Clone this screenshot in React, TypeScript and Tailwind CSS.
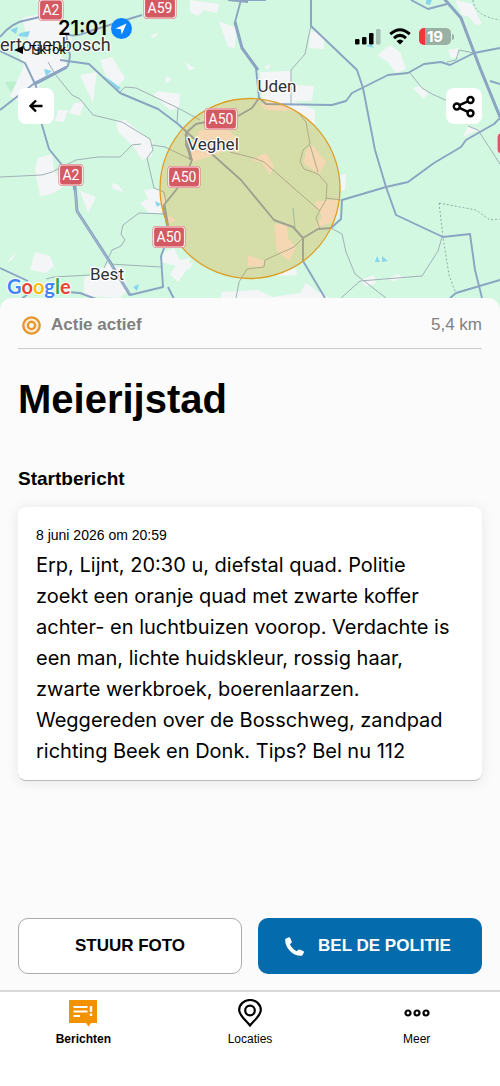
import type { ReactNode } from "react";

const towns = [
  { name: "Uden", x: 277, y: 92 },
  { name: "Veghel", x: 213, y: 150 },
  { name: "Best", x: 107, y: 280 },
];

const shields = [
  { name: "A2", x: 51, y: 10 },
  { name: "A59", x: 160, y: 8 },
  { name: "A50", x: 221, y: 119 },
  { name: "A50", x: 184, y: 177 },
  { name: "A2", x: 71, y: 175 },
  { name: "A50", x: 169, y: 237 },
];

const builtUp = [
  "M22 18 L40 14 L68 22 L72 40 L60 52 L68 68 L44 76 L34 98 L22 104 L10 96 L24 66 L18 52 L28 40 Z",
  "M80 75 L97 72 L93 103 Z",
  "M100 60 L112 57 L125 78 L118 86 L106 76 Z",
  "M58 110 L68 110 L64 122 L55 121 Z M74 103 L84 102 L80 116 L69 113 Z",
  "M116 121 L125 120 L153 142 L152 156 L142 160 L133 146 L118 132 Z",
  "M38 158 L52 154 L54 170 L64 186 L52 194 L40 196 L35 170 Z",
  "M80 191 L96 197 L88 213 Z M112 183 L118 185 L124 192 L113 189 Z",
  "M144 190 L160 188 L166 202 L162 214 L150 214 L140 203 L148 199 Z",
  "M153 95 L158 91 L180 94 L179 108 L170 110 Z",
  "M185 62 L195 68 L189 71 Z M166 76 L172 79 L165 84 Z M150 36 L159 32 L154 38 Z",
  "M190 0 L219 4 L217 13 L204 10 L198 16 L190 12 Z",
  "M219 21 L236 28 L235 48 L228 47 Z",
  "M260 72 L291 71 L291 85 L314 86 L312 101 L293 101 L315 110 L315 124 L298 113 L262 102 Z",
  "M310 30 L324 36 L324 49 L309 48 Z",
  "M264 67 L271 64 L268 70 Z",
  "M377 55 L390 45 L400 52 L406 69 L396 73 L388 62 Z",
  "M448 50 L458 48 L459 57 L451 58 Z",
  "M413 88 L420 86 L428 93 L424 99 Z",
  "M455 0 L472 4 L482 24 L476 25 L468 16 L462 15 Z",
  "M463 137 L468 126 L480 130 L472 133 Z",
  "M340 175 L346 174 L345 190 L341 191 Z",
  "M35 252 L50 256 L54 266 L46 273 L30 270 Z M7 262 L16 252 L12 260 Z",
  "M84 278 L108 264 L122 268 L128 290 L120 298 L84 296 Z",
  "M164 252 L174 248 L180 260 L190 258 L188 268 L178 282 L170 274 L176 266 L162 262 Z",
  "M188 264 L194 262 L190 268 L184 271 Z",
  "M222 292 L258 290 L272 297 L300 293 L306 283 L318 292 L330 298 L220 300 Z",
  "M276 274 L296 268 L297 275 L278 276 Z",
  "M360 280 L374 275 L376 283 L366 287 Z M388 279 L398 274 L403 278 L394 281 Z",
];

// towns that lie inside the search radius
const builtUpInside = [
  "M190 150 L200 130 L228 130 L240 140 L232 148 L212 156 L192 162 Z",
  "M260 104 L288 106 L286 111 L266 110 Z",
  "M259 156 L266 153 L274 166 L270 175 L262 163 L252 160 Z",
  "M306 150 L312 145 L326 162 L319 174 L304 163 Z",
  "M314 202 L340 199 L338 216 L332 222 L316 228 L322 216 Z",
  "M274 224 L287 225 L288 238 L296 248 L289 261 L277 251 Z",
  "M248 255 L264 261 L262 267 L248 266 Z",
  "M166 214 L176 220 L168 224 Z",
];

const majorRoads = [
  "M0 37 Q12 22 27 20 L40 17",
  "M0 51 L25 63 L36 86 L42 125 L49 149 L62 165 L71 176 L76 196 L77 211 L110 262 L130 295 L163 287 L161 256 L168 238",
  "M0 110 L36 82 L68 66 L70 56 L66 34 Q75 38 90 31 L142 15",
  "M60 60 L89 64 L120 93 L158 109 L178 124 L190 135 L213 155 L241 180 L274 220 L293 227 L303 238 L303 261 L325 298",
  "M241 0 L235 22 L242 48 L256 68 L259 98 L252 108 L238 116 M221 119 L196 124 L186 133 L186 145 L192 160 L184 180 L164 205 L169 237",
  "M241 0 L266 0 M228 0 L248 2",
  "M258 97 L266 104 L332 105 L346 101 L352 93 L388 75 L408 73 L424 64 L441 62 L450 65 L474 53 L500 48",
  "M311 0 L311 26 L357 70 L363 88 L375 150 L386 187 L396 215 L443 237 L470 234 L475 270 L482 298",
  "M303 238 L318 229 L331 228 L341 219 L342 200 L386 187 L408 182 L434 163 L461 147 L466 140 L494 124 L500 118",
  "M411 0 L428 9 L447 4",
  "M440 -6 L461 18 L480 68 L500 117 M490 81 L500 84",
  "M450 298 L456 293 L500 280",
  "M0 268 L28 281 M68 292 L80 293 L96 299 M20 300 L28 294 M168 287 L174 299",
];

const minorRoads = [
  "M48 62 L55 74 L72 95 L80 99 L93 115 L122 122 L150 139 L153 150 L147 158 L154 188 L164 192 L166 202",
  "M120 92 L125 87 L136 88 L178 108 L177 123 M178 108 L200 120",
  "M152 145 L165 147 L192 160",
  "M0 177 L42 175 L52 172 L76 160 L98 157 L120 157 L132 145 L141 144",
  "M104 268 L112 250 L121 246 L125 240 L121 234 L123 225 L139 213 L166 214",
  "M110 264 L161 267 M46 279 L54 277 L90 275",
  "M311 26 L310 30 L305 54 L291 70 L291 105",
  "M298 112 L306 122 L310 144 L303 150 L300 162 L304 169 L318 174 L327 184 L326 200 L320 210 L316 218 L320 229",
  "M230 152 L254 158 L264 162 L320 211 M310 145 L318 172 M326 198 L341 200",
  "M303 238 L294 247 L265 260 L264 267 L247 269 L239 282 L236 298",
  "M331 228 L342 234 L346 252 L355 274 L386 298 M341 298 L360 281 L422 276 L438 251 L442 237",
  "M410 73 L422 88 L432 94 L450 102",
  "M468 126 L478 130 L500 164 M447 62 L456 60 L459 50 L474 53",
];

const water = [
  "M10 30 L18 27 L16 34 Z M20 33 L30 31 L28 37 L18 36 Z",
  "M44 69 L52 71 L46 76 Z",
  "M104 76 L121 88 L118 90 Z",
  "M375 262 L377 256 L380 262 Z M382 256 L388 261 L382 262 Z",
  "M155 201 L161 204 L157 207 Z",
  "M133 287 L139 284 L137 291 Z",
  "M426 0 L432 0 L430 5 L426 4 Z M366 46 L371 44 L374 48 Z",
];

function GoogleMap() {
  return (
    <svg
      className="absolute inset-0 h-full w-full"
      viewBox="0 0 500 310"
      preserveAspectRatio="xMidYMin slice"
      role="img"
      aria-label="Kaart"
    >
      <rect width="500" height="310" fill="#d2f8e2" />
      <path d="M5 82 L18 81 L14 98 Z" fill="#baf0ce" />
      {builtUp.map((d) => (
        <path key={d} d={d} fill="#f4f5f6" />
      ))}
      {builtUpInside.map((d) => (
        <path key={d} d={d} fill="#ffeff0" />
      ))}
      {water.map((d) => (
        <path key={d} d={d} fill="#88d5ee" />
      ))}
      <path d="M293 208 L295 228" stroke="#88c8d8" strokeWidth="1" />
      {minorRoads.map((d) => (
        <path key={d} d={d} fill="none" stroke="#9fb2b6" strokeWidth="1" />
      ))}
      <path
        d="M473 0 Q474 16 500 20 M439 203 L476 210 L490 220 L500 219 M439 203 L443 237 L449 275 L455 291"
        fill="none"
        stroke="#93aaa6"
        strokeWidth="1"
        strokeDasharray="2 2"
      />
      {majorRoads.map((d) => (
        <path key={d} d={d} fill="none" stroke="#8aa4c1" strokeWidth="1.9" strokeLinejoin="round" />
      ))}
      <path
        d="M35 84 L67 67 M75 186 L77 211 L110 262 L130 295 M186 134 L191 160 M235 22 L242 48 L258 70 M164 205 L169 234 M440 -6 L461 18 L480 68 L500 117"
        fill="none"
        stroke="#8aa4c1"
        strokeWidth="3"
        strokeLinejoin="round"
      />
      <path d="M75 190 L77 211 L130 294" fill="none" stroke="#b4c6d8" strokeWidth="0.7" />

      <circle cx="250" cy="188.500" r="90" fill="#dc9610" fillOpacity=".27" stroke="#dd9e26" strokeWidth="1.3" />

      {shields.map((s) => {
        const w = s.name.length === 2 ? 23 : 31;
        return (
          <g key={s.name + s.x}>
            <rect x={s.x - w / 2 - 1} y={s.y - 11} width={w + 2} height="22" rx="4" fill="#d6666d" />
            <rect x={s.x - w / 2} y={s.y - 10} width={w} height="20" rx="3" fill="#d35a62" stroke="#fbe6e8" strokeWidth="1.2" />
            <text x={s.x} y={s.y + 5} textAnchor="middle" fill="#fff" className="font-[Roboto] text-[14px]">
              {s.name}
            </text>
          </g>
        );
      })}
      <rect x="497" y="133" width="30" height="21" rx="4" fill="#d35a62" stroke="#fbe6e8" strokeWidth="1.2" />
      {towns.map((t) => (
        <text
          key={t.name}
          x={t.x}
          y={t.y}
          textAnchor="middle"
          fill="#2f3133"
          stroke="#fff"
          strokeWidth="2.5"
          strokeLinejoin="round"
          paintOrder="stroke"
          className="font-[Roboto] text-[17px]"
        >
          {t.name}
        </text>
      ))}
      <text
        x="0"
        y="51"
        fill="#2f3133"
        stroke="#fff"
        strokeWidth="2"
        strokeLinejoin="round"
        paintOrder="stroke"
        className="font-[Roboto] text-[18px]"
      >
        ertogenbosch
      </text>
      <text x="7" y="294" stroke="#fff" strokeWidth="2" paintOrder="stroke" className="font-[Lato] text-[20px] font-bold">
        <tspan fill="#4285f4">G</tspan>
        <tspan fill="#ea4335">o</tspan>
        <tspan fill="#fbbc05">o</tspan>
        <tspan fill="#4285f4">g</tspan>
        <tspan fill="#34a853">l</tspan>
        <tspan fill="#ea4335">e</tspan>
      </text>
    </svg>
  );
}

function StatusBar() {
  return (
    <div className="relative flex items-start justify-between pt-4 pr-[46px] pl-3.5 font-[Inter] text-black">
      <div>
        <div className="flex items-center gap-1 pl-11">
          <span className="text-xl/6 font-semibold">21:01</span>
          <svg width="21" height="21" viewBox="0 0 21 21">
            <circle cx="10.500" cy="10.500" r="10.500" fill="#0a84ff" />
            <path d="M15.500 5.500 L4.500 10.500 L9.800 11.300 L10.700 16.500 Z" fill="#fff" />
          </svg>
        </div>
        <a href="#tiktok" className="mt-0.5 flex items-center gap-1.5 text-xs/4">
          <svg width="9" height="8" viewBox="0 0 9 8">
            <path d="M9 0 V8 L0 4 Z" />
          </svg>
          TikTok
        </a>
      </div>
      <div className="flex items-center gap-2 pt-3">
        <svg width="26" height="17" viewBox="0 0 26 17">
          <rect x="0" y="11" width="4.500" height="5.500" rx="1.200" />
          <rect x="7" y="9" width="4.500" height="7.500" rx="1.200" />
          <rect x="14" y="5" width="4.500" height="11.500" rx="1.200" />
          <rect x="21" y="1" width="4.500" height="15.500" rx="1.200" fill="#a3c2b3" />
        </svg>
        <svg width="22" height="17" viewBox="0 0 22 17" fill="none" stroke="currentColor" strokeWidth="3">
          <path d="M1.300 6.200 Q11 -2.800 20.700 6.200" />
          <path d="M5 10.100 Q11 4.700 17 10.100" />
          <path d="M11 16.500 L7.500 13 Q11 9.800 14.500 13 Z" fill="currentColor" stroke="none" />
        </svg>
        <div className="flex items-center gap-px">
          <div className="flex h-[17px] w-8 items-center justify-center rounded-[5px] bg-linear-to-r from-[#f5333b] from-20% to-[#9ab0a4] to-20% text-[15px]/4 font-bold text-white">
            19
          </div>
          <div className="h-1.5 w-0.5 rounded-r bg-[#9ab0a4]" />
        </div>
      </div>
    </div>
  );
}

function MapButton({ label, children }: { label: string; children: ReactNode }) {
  return (
    <button aria-label={label} className="flex size-9 items-center justify-center rounded-lg bg-white">
      {children}
    </button>
  );
}

function MessageIcon() {
  return (
    <svg width="28" height="27" viewBox="0 0 28 27">
      <path d="M0 0 H28 V23 H22 L19.500 26.500 L17 23 H0 Z" fill="#f39200" />
      <path d="M4.500 7 H18.500 M4.500 11.500 H18.500 M4.500 16 H11" stroke="#fff" strokeWidth="2" />
      <path d="M22 6 V12 M22 13.500 V16" stroke="#fff" strokeWidth="2.400" />
    </svg>
  );
}

function PinIcon() {
  return (
    <svg width="24" height="28" viewBox="0 0 24 28" fill="none" stroke="#000" strokeWidth="2.200">
      <path d="M12 26.500 C8 21.500 1.200 16.500 1.200 11 A10.800 10 0 0 1 22.800 11 C22.800 16.500 16 21.500 12 26.500 Z" />
      <circle cx="12" cy="11.500" r="4.800" />
    </svg>
  );
}

function DotsIcon() {
  return (
    <svg width="26" height="8" viewBox="0 0 26 8" fill="none" stroke="#000" strokeWidth="2.200">
      <circle cx="4" cy="4" r="2.500" />
      <circle cx="13" cy="4" r="2.500" />
      <circle cx="22" cy="4" r="2.500" />
    </svg>
  );
}

const tabs = [
  { href: "#berichten", label: "Berichten", icon: <MessageIcon />, active: true },
  { href: "#locaties", label: "Locaties", icon: <PinIcon />, active: false },
  { href: "#meer", label: "Meer", icon: <DotsIcon />, active: false },
];

export default function App() {
  return (
    <div className="flex min-h-screen flex-col bg-[#fbfbfb] font-['Liberation_Sans',sans-serif] text-black">
      <header className="relative h-[310px] overflow-hidden">
        <GoogleMap />
        <StatusBar />
        <div className="relative flex justify-between px-[18px] pt-[30px]">
          <MapButton label="Terug">
            <svg width="14" height="14" viewBox="0 0 14 14" fill="none" stroke="#000" strokeWidth="2.400">
              <path d="M13.500 7 H1.800 M7 1.500 L1.500 7 L7 12.500" />
            </svg>
          </MapButton>
          <MapButton label="Delen">
            <svg width="24" height="24" viewBox="0 0 24 24" fill="none" stroke="#000" strokeWidth="2.400">
              <circle cx="4.800" cy="12.500" r="3" />
              <circle cx="18.500" cy="6" r="3" />
              <circle cx="18.500" cy="19.200" r="3" />
              <path d="M7.500 11.200 L15.800 7.400 M7.500 13.800 L15.800 17.800" />
            </svg>
          </MapButton>
        </div>
      </header>

      <main className="relative -mt-3 flex flex-1 flex-col rounded-t-xl bg-[#fbfbfb] px-[18px]">
        <div className="flex items-center border-b border-[#cbcbcb] pt-4 pb-3 text-[17px]/[22px] text-[#808080]">
          <svg width="19" height="19" viewBox="0 0 19 19" fill="none" stroke="#e8922a" strokeWidth="2.300" className="ml-1">
            <circle cx="9.500" cy="9.500" r="6" stroke="#fcebd3" />
            <circle cx="9.500" cy="9.500" r="8.200" />
            <circle cx="9.500" cy="9.500" r="3.600" />
          </svg>
          <span className="ml-2.5 font-bold">Actie actief</span>
          <span className="ml-auto">5,4 km</span>
        </div>

        <h1 className="mt-6.5 text-[40px]/[48px] font-bold">Meierijstad</h1>
        <h2 className="mt-11 text-[19px]/6 font-bold">Startbericht</h2>

        <article className="mt-4 rounded-lg border-b border-[#b9b9b9] bg-white pt-[18px] pr-6 pb-[13px] pl-[18px] shadow-[0_1px_14px_rgba(0,0,0,0.09)]">
          <time className="block text-sm/5">8 juni 2026 om 20:59</time>
          <p className="mt-[5px] font-[Inter] text-xl/[31px]">
            Erp, Lijnt, 20:30 u, diefstal quad. Politie zoekt een oranje quad met zwarte koffer achter- en luchtbuizen
            voorop. Verdachte is een man, lichte huidskleur, rossig haar, zwarte werkbroek, boerenlaarzen. Weggereden
            over de Bosschweg, zandpad richting Beek en Donk. Tips? Bel nu 112
          </p>
        </article>

        <div className="mt-auto grid grid-cols-2 gap-4 pt-8 pb-4 text-[17px]/6 font-bold">
          <button className="h-14 rounded-[10px] border border-[#ababab] bg-white">STUUR FOTO</button>
          <button className="flex h-14 items-center justify-center gap-3.5 rounded-[10px] bg-[#046bad] pr-1 text-white">
            <svg width="19" height="19" viewBox="0 0 19 19" fill="currentColor">
              <path d="M1 1.500 L3.800 0.200 Q4.800 0 5.200 1 L6.700 4.600 Q7 5.500 6.200 6.100 L4.900 7.300 Q7 12 11.700 14.300 L13 12.900 Q13.600 12.200 14.500 12.500 L18.200 14 Q19.200 14.500 18.900 15.500 L17.600 18 Q17.200 18.700 16.400 18.800 Q9.500 19 4.500 13.500 Q0 8.500 0.200 2.500 Q0.300 1.800 1 1.500 Z" />
            </svg>
            BEL DE POLITIE
          </button>
        </div>
      </main>

      <nav className="relative grid h-24 grid-cols-3 border-t-2 border-[#d9d9d9] bg-white pt-[7px]">
        {tabs.map(({ href, label, icon, active }) => (
          <a key={href} href={href} className="flex flex-col items-center gap-1 text-xs/4">
            <span className="flex h-7 items-center justify-center">{icon}</span>
            <span className={active ? "font-bold" : ""}>{label}</span>
          </a>
        ))}
      </nav>
    </div>
  );
}
